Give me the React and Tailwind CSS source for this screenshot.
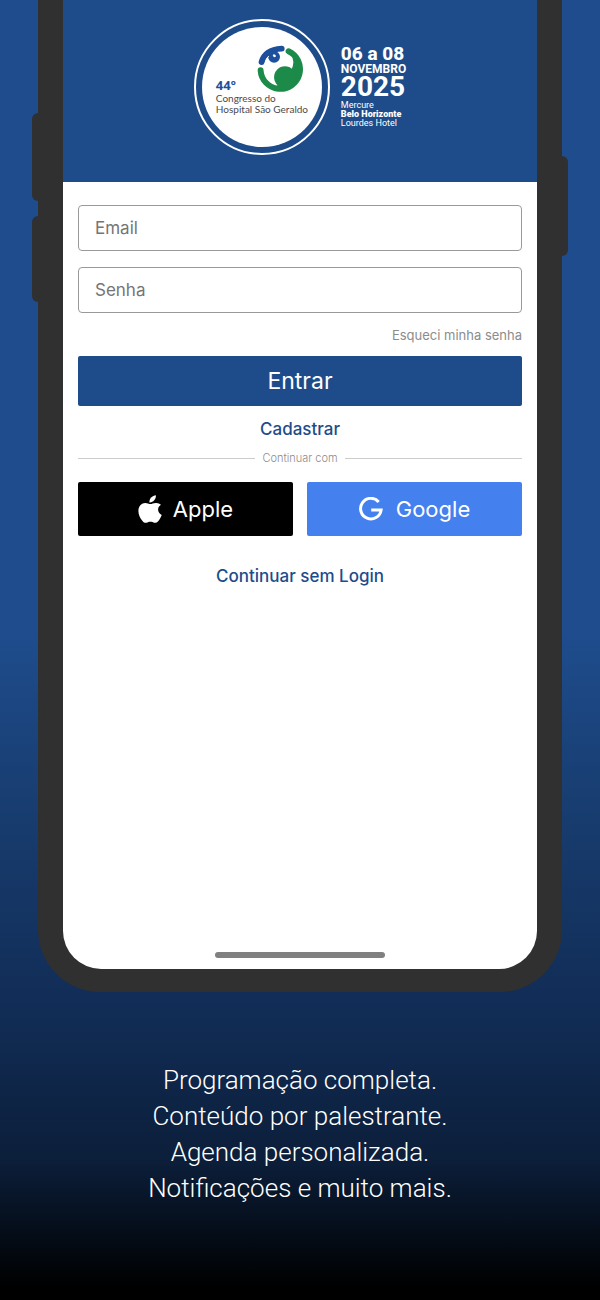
import React from "react";

function EyeMark() {
  return (
    <svg viewBox="205 105 141 146" className="h-[48px] w-[47px] shrink-0" aria-hidden="true">
      <path d="M215 182A60 60 0 1 0 300 124" fill="none" stroke="#1c8a48" strokeWidth="18" strokeLinecap="round" />
      <path d="M306 130Q322 155 308 182L290 215L325 215L338 185L340 165Z" fill="#1c8a48" />
      <circle cx="289" cy="203" r="33" fill="#1c8a48" />
      <path d="M264 234L268 222H325Q305 244 264 240Z" fill="#1c8a48" />
      <path d="M218 157Q228 119 279 116" fill="none" stroke="#1c4f9c" strokeWidth="18" strokeLinecap="round" />
      <circle cx="256" cy="141" r="18" fill="#1c4f9c" />
      <path d="M230 156Q232 144 240 139" fill="none" stroke="#fff" strokeWidth="3" />
      <path d="M254 133Q263 133 261 141Q255 144 252 138Z" fill="#fff" />
    </svg>
  );
}

function AppleLogo() {
  return (
    <svg viewBox="0 0 24 28" className="h-7 w-6" fill="currentColor" aria-hidden="true">
      <path d="M17.9 0.2c.2 2-.6 3.8-1.7 5.1-1.2 1.4-3 2.4-4.8 2.2-.2-1.9.7-3.8 1.7-5C14.300 1.200 16.300.300 17.900.200z" />
      <path d="M23 9.800c-1.800 1.100-2.900 2.700-2.900 4.800 0 2.600 1.500 4.500 3.600 5.300-.8 2.400-2.300 4.900-3.800 6.600-1 1.100-2 1.500-3.400 1.200-1.600-.4-2.300-1-4-1-1.800 0-2.500.6-4 1-1.500.4-2.700-.2-3.800-1.500C2.100 23.300.3 19.500.4 15.700.5 11.100 3.400 7.900 7.200 7.900c2.200 0 3.800 1.200 5.200 1.200S15.700 7.700 18.200 7.900c2 .1 3.700.8 4.800 1.900z" />
    </svg>
  );
}

function GoogleLogo() {
  return (
    <svg viewBox="0 0 24 24" className="size-6" fill="none" stroke="currentColor" strokeWidth="3" aria-hidden="true">
      <path d="M19.700 4.900A10.300 10.300 0 1 0 22.100 13.100H12.200" />
    </svg>
  );
}

function Header() {
  return (
    <header className="flex items-start justify-center gap-[11px] bg-[#1e4c8a] pt-[19px] pb-[27px] text-white">
      <div className="flex size-[136px] shrink-0 items-center justify-center rounded-full border-2 border-white">
        <div className="flex size-[120px] flex-col items-start rounded-full bg-white pt-[18px] pl-[14px] text-[#4a4a4a]">
          <div className="flex items-end gap-[21px]">
            <span className="font-['Noto_Sans',sans-serif] text-[13px] leading-4 font-bold text-[#1c4f9c]">44º</span>
            <EyeMark />
          </div>
          <p className="font-['Lato',sans-serif] text-[10px] leading-[11px] whitespace-nowrap">
            Congresso do
            <br />
            Hospital São Geraldo
          </p>
        </div>
      </div>
      <div className="pt-[25px] font-['Roboto',sans-serif] whitespace-nowrap">
        <p className="text-[19px] leading-5 font-extrabold">06 a 08</p>
        <p className="text-[12px] leading-[10px] font-bold">NOVEMBRO</p>
        <p className="text-[28px] leading-[26px] font-bold">2025</p>
        <p className="pt-[1px] text-[9px] leading-[9px]">
          Mercure
          <br />
          <strong className="font-black">Belo Horizonte</strong>
          <br />
          Lourdes Hotel
        </p>
      </div>
    </header>
  );
}

function Field({ id, label, type }) {
  return (
    <input
      id={id}
      type={type}
      aria-label={label}
      placeholder={label}
      className="mb-4 block h-[46px] w-full rounded-[4px] border border-[#999] bg-white px-4 text-[17px] text-[#333] placeholder:text-[#757575]"
    />
  );
}

function LoginForm() {
  return (
    <form className="px-[15px] pt-[23px]" onSubmit={(e) => e.preventDefault()}>
      <Field id="email" label="Email" type="email" />
      <Field id="senha" label="Senha" type="password" />
      <div className="-mt-1 flex justify-end">
        <a href="#esqueci" className="text-[13px] leading-5 text-[#8c8c8c]">Esqueci minha senha</a>
      </div>
      <button type="submit" className="mt-[11px] h-[50px] w-full rounded-[2px] bg-[#1e4c8a] text-[23px] text-white">
        Entrar
      </button>
      <div className="mt-[11px] text-center">
        <a href="#cadastrar" className="block text-[17px] leading-6 font-medium text-[#1e4c8a]">Cadastrar</a>
      </div>
      <div className="mt-[7px] flex items-center gap-[7px]">
        <span className="h-px flex-1 bg-[#ccc]" />
        <span className="text-[11px] leading-5 font-light text-[#8c8c8c]">Continuar com</span>
        <span className="h-px flex-1 bg-[#ccc]" />
      </div>
      <div className="mt-[14px] grid grid-cols-2 gap-[14px] text-[22px] text-white">
        <button type="button" className="flex h-[54px] items-center justify-center gap-[11px] rounded-[2px] bg-black">
          <AppleLogo />
          Apple
        </button>
        <button type="button" className="flex h-[54px] items-center justify-center gap-[13px] rounded-[2px] bg-[#4580ef]">
          <GoogleLogo />
          Google
        </button>
      </div>
      <div className="mt-7 text-center">
        <a href="#sem-login" className="block text-[17px] leading-6 font-medium text-[#1e4c8a]">Continuar sem Login</a>
      </div>
    </form>
  );
}

export default function App() {
  return (
    <main className="min-h-screen bg-[linear-gradient(to_bottom,#1e4c8c_0%,#1e4c8c_49%,#183d70_62%,#112c55_78%,#0c1f3b_89%,#000_99%)] font-['Inter',sans-serif]">
      <div className="relative mx-[38px] rounded-b-[62px] bg-[#303030] px-[25px] pb-[23px]">
        <span className="absolute top-[113px] -left-[6px] h-[88px] w-2 rounded-l-[6px] bg-[#303030]" />
        <span className="absolute top-[216px] -left-[6px] h-[86px] w-2 rounded-l-[6px] bg-[#303030]" />
        <span className="absolute top-[156px] -right-[6px] h-[100px] w-2 rounded-r-[6px] bg-[#303030]" />
        <div className="flex min-h-[969px] flex-col overflow-hidden rounded-b-[38px] bg-white">
          <Header />
          <LoginForm />
          <div className="mx-auto mt-auto mb-[11px] h-[6px] w-[170px] rounded-full bg-[#808080]" />
        </div>
      </div>
      <p className="px-4 pt-[70px] pb-[90px] text-center font-['Roboto',sans-serif] text-[26px] leading-9 font-light text-white">
        Programação completa.
        <br />
        Conteúdo por palestrante.
        <br />
        Agenda personalizada.
        <br />
        Notificações e muito mais.
      </p>
    </main>
  );
}
